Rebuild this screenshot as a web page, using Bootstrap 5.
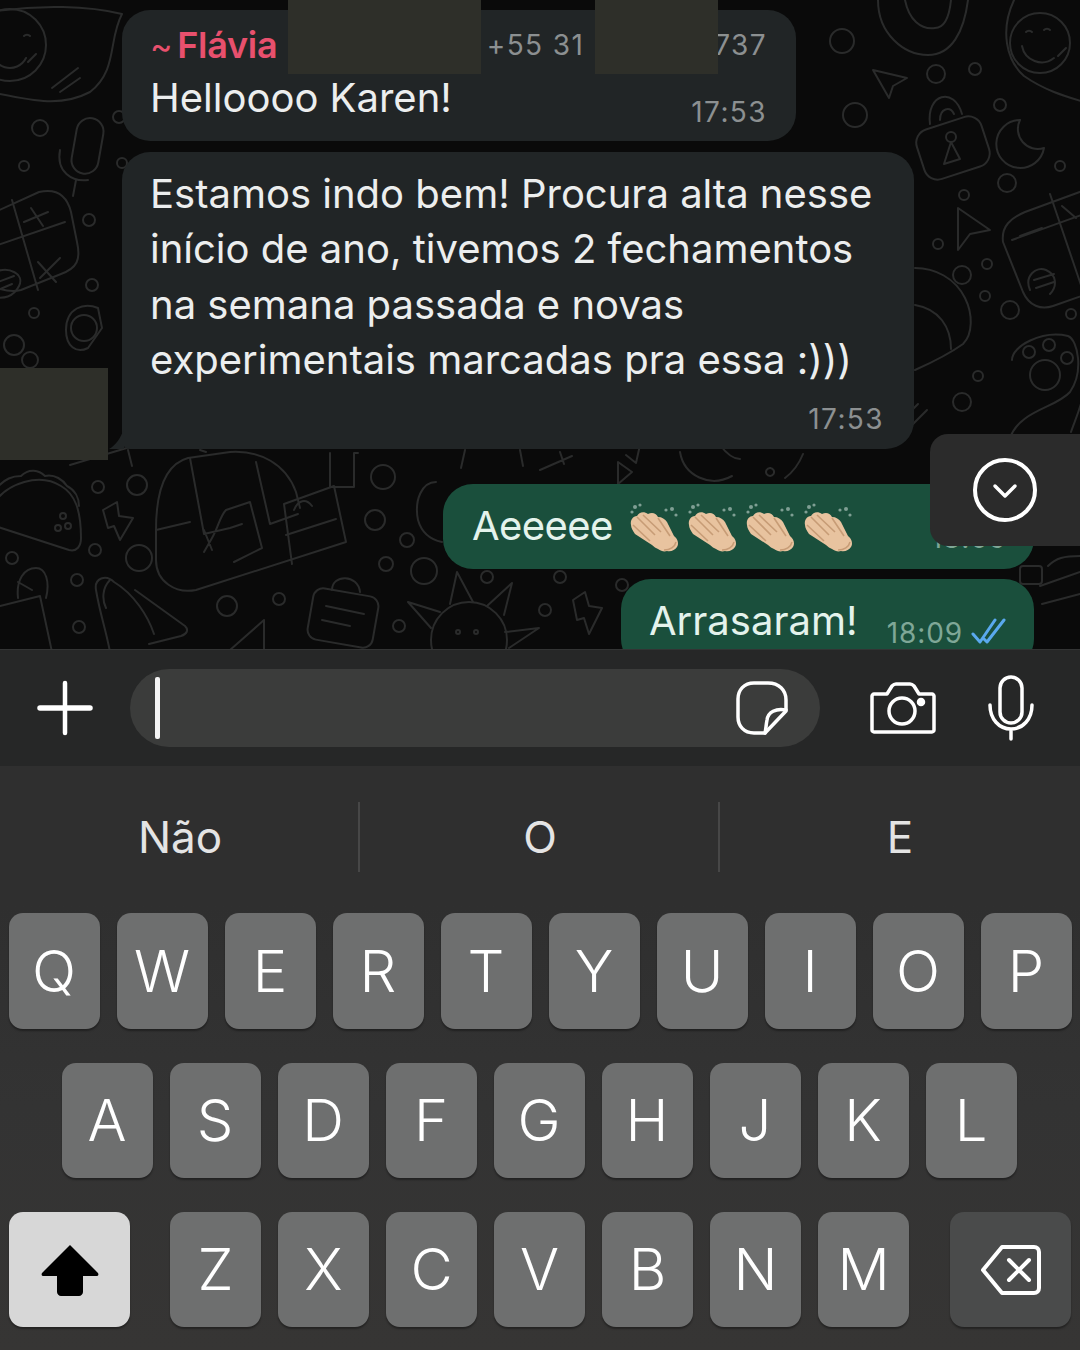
<!DOCTYPE html>
<html lang="pt-BR">
<head>
  <meta charset="UTF-8">
  <title>Conversa</title>
  <meta name="viewport" content="width=device-width, initial-scale=1">
  <link href="https://cdn.jsdelivr.net/npm/bootstrap@5.3.3/dist/css/bootstrap.min.css" rel="stylesheet">
  <script src="https://cdn.jsdelivr.net/npm/bootstrap@5.3.3/dist/js/bootstrap.bundle.min.js"></script>
  <style>
    body {
      background: #2d2d2d;
      font-family: Inter, "Liberation Sans", sans-serif;
      width: 1080px;
      height: 1350px;
      overflow: hidden;
    }
    .chat-area {
      height: 649px;
      background: #0a0a0a;
      padding-top: 10px;
    }
    .wallpaper { left: 0; top: 0; }
    .wallpaper * { fill: none; stroke: #2a2b2b; stroke-width: 2; stroke-linecap: round; stroke-linejoin: round; }
    .bubble {
      color: #eceeee;
      font-size: 40px;
      line-height: 55.3px;
    }
    .bubble-in { background: #212526; margin-left: 122px; }
    .bubble-out { background: #1a4f3c; margin-left: auto; margin-right: 46px; color: #e4f3ec; }
    .bubble-one { width: 674px; height: 131px; border-radius: 28px; padding: 7px 29px 0 28px; margin-bottom: 11px; }
    .bubble-two { width: 792px; height: 297px; border-radius: 28px 28px 28px 8px; padding: 14px 30px 0 28px; margin-bottom: 35px; }
    .bubble-three { width: 591px; height: 85px; border-radius: 30px; padding: 14px 27px 0 29px; margin-bottom: 10px; }
    .bubble-four { width: 413px; height: 90px; border-radius: 30px; padding: 14px 27px 0 28px; }
    .tail { left: -14px; bottom: 0; }
    .sender { color: #e8506d; font-size: 36px; font-weight: 600; line-height: 56px; letter-spacing: -.3px; }
    .sender-mark { font-size: 34px; font-weight: 400; margin-right: 5px; }
    .phone { color: #8c9091; font-size: 28px; line-height: 56px; letter-spacing: 1.4px; }
    .phone-gap { display: inline-block; width: 130px; }
    .msg-time { color: #8c9091; font-size: 28px; line-height: 32px; letter-spacing: 1.4px; }
    .out-time { color: #7fa797; letter-spacing: .9px; }
    .tight-text { letter-spacing: -.6px; }
    .hello-row { margin-top: -4px; }
    .hello-row .msg-time { margin-top: 26px; }
    .time-right { margin-top: 16px; }
    .out-meta { margin-top: 24px; }
    .redact { background: #2e2f29; }
    .redact-a { left: 288px; top: 0; width: 193px; height: 74px; }
    .redact-b { left: 595px; top: 0; width: 123px; height: 74px; }
    .redact-c { left: 0; top: 368px; width: 108px; height: 92px; }
    .scroll-down {
      right: 0; top: 434px; width: 150px; height: 112px;
      background: #2b2b2b;
      border-radius: 18px 0 0 18px;
    }
    .composer {
      height: 117px;
      background: #262727;
      border-top: 1px solid #333434;
      padding-left: 36px;
    }
    .field {
      width: 690px; height: 78px;
      margin-left: 36px;
      background: #3b3c3b;
      border-radius: 39px;
      padding-left: 25px;
      padding-right: 32px;
    }
    .caret-bar { width: 5px; height: 62px; background: #f4f4f4; border-radius: 2px; }
    .camera-icon { margin-left: 50px; }
    .mic-icon { margin-left: 52px; }
    .suggest { height: 139px; background: #2f2f2f; }
    .suggest-item { width: 360px; height: 70px; margin-top: 2px; color: #e4e4e4; font-size: 44px; }
    .suggest-item:first-child { width: 358px; padding-left: 2px; }
    .suggest-item + .suggest-item { border-left: 2px solid #474747; padding-left: 2px; }
    .keyboard {
      height: 445px;
      padding-top: 8px;
      background: linear-gradient(to bottom, #2f2f2f 0%, #333 45%, #363534 100%);
    }
    .key-row { gap: 17px; margin-bottom: 34px; }
    .key-cap {
      width: 91px; height: 116px;
      background: #6e6f6f;
      border-radius: 14px;
      color: #fff;
      font-size: 58px;
      font-weight: 300;
      box-shadow: 0 2px 2px rgba(0,0,0,.35);
    }
    .row-lower .key-cap { height: 115px; }
    .row-shifted { padding-right: 2px; }
    .key-wide { width: 121px; }
    .key-shift { background: #d7d7d7; }
    .key-back { background: #4a4b4b; }
    .gap-shift { margin-left: 23px; }
    .gap-back { margin-left: 24px; }
  </style>
</head>
<body>
  <div class="chat-area position-relative overflow-hidden">
    <svg class="wallpaper position-absolute" width="1080" height="649" viewBox="0 0 1080 649">
      <!-- lado esquerdo -->
      <path d="M-10 12C40 4 90 6 122 14C108 40 118 70 90 92C60 108 30 100 -10 92"/>
      <circle cx="10" cy="45" r="36"/><path d="M-8 48a18 18 0 0 0 34 10M24 36a4 4 0 0 1 6 0M28 62l8-8"/>
      <path d="M52 88l26-20M60 92l20-14"/>
      <circle cx="40" cy="128" r="8"/><circle cx="24" cy="166" r="5"/><circle cx="119" cy="117" r="6"/><circle cx="122" cy="163" r="5"/>
      <rect x="74" y="118" width="27" height="56" rx="13.5" transform="rotate(10 88 146)"/>
      <path d="M60 150c-4 22 12 32 28 30M76 180l-3 16"/>
      <path d="M-5 212l44-20c18-4 28 4 32 20l6 30c4 18 0 26-16 32l-40 16c-8 2-20 0-30-4M12 200l26 90M-5 246l70-24"/>
      <path d="M31 208l12 18M24 222l24-10M38 262l18 20M60 258l-20 20"/>
      <circle cx="89" cy="220" r="6"/><circle cx="34" cy="313" r="5"/><circle cx="92" cy="285" r="6"/>
      <path d="M-5 272c14-6 30 2 24 14s-16 12-24 12M-2 282l16-6M-2 290l14-6"/>
      <circle cx="84" cy="328" r="13"/><path d="M66 330c0-22 18-28 32-22l4 20-14 20c-12 6-22 -2 -22-18"/>
      <circle cx="14" cy="345" r="10"/><circle cx="30" cy="360" r="8"/>
      <!-- lado direito -->
      <path d="M878 0c0 34 26 55 50 55c24 0 36-24 40-55M905 0c4 20 16 30 30 28c8 0 14-8 16-28"/>
      <circle cx="842" cy="41" r="12"/><circle cx="936" cy="74" r="9"/><circle cx="975" cy="69" r="6"/><circle cx="855" cy="115" r="12"/>
      <path d="M873 70l34 8-14 8-4 12z"/>
      <path d="M1014 0c-14 30-8 60 10 76c20 14 40 20 60 26"/>
      <circle cx="1040" cy="43" r="30"/><path d="M1022 46a20 20 0 0 0 32 12M1026 32a4 4 0 0 1 6 0M1044 30a4 4 0 0 1 6 0M1058 56l8-8"/>
      <circle cx="1000" cy="105" r="6"/>
      <path d="M1020 120a24 24 0 1 0 24 28a20 20 0 0 1-24-28z"/>
      <rect x="919" y="122" width="68" height="52" rx="14" transform="rotate(-18 953 148)"/>
      <path d="M930 124c-4-30 24-38 32-10M940 120c0-12 10-14 14-6"/>
      <circle cx="951" cy="137" r="5"/><path d="M951 142l-7 22 16-5z"/>
      <circle cx="1007" cy="183" r="9"/><circle cx="1060" cy="166" r="5"/><circle cx="964" cy="195" r="5"/>
      <path d="M958 208l32 22-20 4-12 16z"/>
      <circle cx="938" cy="244" r="5"/><circle cx="962" cy="275" r="9"/><circle cx="987" cy="264" r="5"/><circle cx="985" cy="296" r="5"/>
      <path d="M1085 190l-60 22c-14 6-24 14-22 30l20 50c6 14 18 18 30 14l40-14M1050 194l34 100M1012 240l72-26M1030 290c-6-14 6-24 16-20c10 4 12 16 4 24M1034 280l20-6M1036 288l18-6"/>
      <path d="M1020 236l22-8M1062 206l14 12"/>
      <circle cx="1010" cy="310" r="9"/><circle cx="1071" cy="314" r="5"/>
      <path d="M915 268c20 0 40 10 50 30c8 16 8 36 -2 46c-14 10-30 18-48 26M915 305c24 4 36 22 36 44"/>
      <circle cx="978" cy="376" r="5"/><circle cx="962" cy="402" r="9"/>
      <circle cx="1029" cy="352" r="6"/><circle cx="1049" cy="345" r="6"/><circle cx="1067" cy="358" r="6"/>
      <circle cx="1045" cy="375" r="15"/>
      <path d="M1012 360c0-14 30-30 56-24c10 4 16 36 2 56c-14 16-50 18-60 46M1085 388c-4 20-10 32-14 44"/>
      <path d="M897 440l30-30M888 434l30-30"/>
      <!-- parte de baixo -->
      <path d="M-5 502c12-18 44-30 66-16c14 8 20 24 20 52c0 8-4 14-12 12l-74-24"/>
      <path d="M-5 490c10-12 18-14 26-14c8-8 18-6 24 0c10-2 18 4 22 10c8 4 12 12 12 20"/>
      <circle cx="63" cy="516" r="3"/><circle cx="58" cy="528" r="3"/><circle cx="68" cy="526" r="3"/>
      <path d="M103 510l14-8 2 14 14 2-13 22-6-14-6 2z"/>
      <circle cx="98" cy="487" r="6"/><circle cx="137" cy="485" r="10"/><circle cx="95" cy="550" r="6"/><circle cx="139" cy="558" r="13"/>
      <circle cx="12" cy="558" r="6"/><circle cx="77" cy="580" r="6"/><circle cx="79" cy="627" r="6"/>
      <path d="M156 530c0-40 10-66 32-72l42-6c30-2 56 12 66 40l4 16M156 530v30c0 22 20 34 40 30l150-48-12-56-50 18 8 60"/>
      <path d="M156 530l34-8M190 458l14 76 26-6 12-4M200 450l6 2M212 550l-8-20M204 552l8-14c6-10 8-22 14-28l24-8 12 46-28 14M256 462l14 62 28-10"/>
      <path d="M294 510c4-10 12-12 18-4M286 535l50-16"/>
      <path d="M330 453v34h24v-34M354 453h4"/>
      <circle cx="383" cy="477" r="12"/><circle cx="375" cy="520" r="10"/><circle cx="407" cy="540" r="7"/><circle cx="386" cy="564" r="7"/><circle cx="424" cy="571" r="13"/>
      <path d="M418 520c-4-20 4-38 18-38M418 520c4 14 14 20 24 22"/>
      <path d="M70 465l60-18M128 450l4 16"/>
      <circle cx="227" cy="606" r="10"/><circle cx="279" cy="599" r="6"/><circle cx="399" cy="626" r="6"/>
      <circle cx="487" cy="577" r="6"/><circle cx="560" cy="577" r="6"/><circle cx="622" cy="585" r="6"/>
      <path d="M96 590c-2-12 10-16 18-8c20 12 34 34 40 52M110 580c-8 8-8 20-4 28M96 590c4 24 10 40 14 62M135 590l50 36c4 4 2 8-4 10l-32 8"/>
      <path d="M0 606l40-10 12 56M18 598c-2-18 6-30 18-30c10 0 14 14 10 30M18 582l14 8"/>
      <path d="M230 650l34-30v30"/>
      <rect x="310" y="592" width="66" height="52" rx="10" transform="rotate(10 343 618)"/>
      <path d="M332 590c0-16 26-16 28 2M326 606l38 8M322 620l28 6"/>
      <circle cx="469" cy="640" r="38"/>
      <path d="M450 604l7-32 16 30M487 606l25-23-8 32M431 628l-23-26 32 10M505 632l34-4-30 20"/>
      <circle cx="458" cy="632" r="2"/><circle cx="476" cy="632" r="2"/>
      <path d="M573 600l12-8 4 14 13 2-13 26-5-16-7 2z"/>
      <circle cx="545" cy="610" r="6"/>
      <path d="M640 445l-4 18-10-8M680 452c4 24 30 36 52 24M720 445c6 8 12 14 20 14M465 450l-4 18M520 450l3 16M540 470l32-14M560 452l4 12"/>
      <path d="M618 462l14 10-14 12zM785 478c8-6 14-14 18-24M770 468a4 4 0 1 0 .1 0"/>
      <path d="M1040 586l40-14M1042 604l38-10"/>
      <rect x="1020" y="566" width="22" height="18" rx="3"/>
      <path d="M1048 566c8-8 16-10 32-10"/>
    </svg>

    <div class="bubble bubble-in bubble-one position-relative">
      <div class="d-flex justify-content-between">
        <span class="sender"><span class="sender-mark">~</span>Flávia</span>
        <span class="phone">+55 31<span class="phone-gap"></span>737</span>
      </div>
      <div class="d-flex justify-content-between hello-row">
        <span>Helloooo Karen!</span>
        <span class="msg-time">17:53</span>
      </div>
    </div>

    <div class="bubble bubble-in bubble-two position-relative">
      <svg class="tail position-absolute" width="16" height="20" viewBox="0 0 16 20"><path d="M16 0V20H1C8 16 12 10 16 0z" fill="#212526"/></svg>
      <div>Estamos indo bem! Procura alta nesse<br>início de ano, tivemos 2 fechamentos<br>na semana passada e novas<br>experimentais marcadas pra essa :)))</div>
      <div class="msg-time text-end time-right">17:53</div>
    </div>

    <div class="bubble bubble-out bubble-three position-relative d-flex justify-content-between">
      <span class="d-flex align-items-start tight-text">Aeeeee
        <svg class="ms-3" width="225" height="54" viewBox="0 0 225 54">
          <defs>
            <g id="clap">
              <g fill="#7f9f94"><circle cx="3" cy="14" r="1.6"/><circle cx="6" cy="9" r="2"/><circle cx="11" cy="7" r="1.6"/><circle cx="37" cy="12" r="1.6"/><circle cx="43" cy="11" r="2"/><circle cx="47" cy="17" r="1.6"/></g>
              <path d="M2 27c-1-5 2-9 6-9 2-4 7-5 11-2 4-2 8-1 10 3 4 0 7 2 9 5l7 14c4 3 5 8 3 11-2 3-6 5-10 4-3 1-6 0-9-2-2-1-4-2-6-4L6 36c-2-3-4-6-4-9z" fill="#e8c39f"/>
              <path d="M8 19l18 18M14 17l18 17M4 27l17 16M29 20l12 18" stroke="#c79c76" stroke-width="1.6" fill="none"/>
              <path d="M35 52c6 0 11-3 12-8" stroke="#c79c76" stroke-width="1.5" fill="none"/>
            </g>
          </defs>
          <use href="#clap"/><use href="#clap" x="58"/><use href="#clap" x="116"/><use href="#clap" x="174"/>
        </svg>
      </span>
      <span class="msg-time out-time out-meta">18:09</span>
    </div>

    <div class="bubble bubble-out bubble-four d-flex justify-content-between">
      <span>Arrasaram!</span>
      <span class="d-flex align-items-start out-meta">
        <span class="msg-time out-time">18:09</span>
        <svg class="ms-2" width="36" height="28" viewBox="0 0 36 28" fill="none" stroke="#5aa9ee" stroke-width="3" stroke-linecap="round" stroke-linejoin="round"><path d="M2 17l7 8L24 3M13 22l3 3L33 3"/></svg>
      </span>
    </div>

    <div class="redact position-absolute redact-a"></div>
    <div class="redact position-absolute redact-b"></div>
    <div class="redact position-absolute redact-c"></div>
    <div class="scroll-down position-absolute d-flex align-items-center justify-content-center">
      <svg width="66" height="66" viewBox="0 0 66 66" fill="none" stroke="#fff" stroke-linecap="round" stroke-linejoin="round"><circle cx="33" cy="33" r="30" stroke-width="4"/><path d="M23 29l10 10 10-10" stroke-width="3.5"/></svg>
    </div>
  </div>

  <div class="composer d-flex align-items-center">
    <svg width="58" height="58" viewBox="0 0 58 58" stroke="#fff" stroke-linecap="round"><path d="M29 4v50" stroke-width="4.5"/><path d="M4 29h50" stroke-width="5.5"/></svg>
    <div class="field d-flex align-items-center justify-content-between">
      <span class="caret-bar"></span>
      <svg width="52" height="54" viewBox="0 0 52 54" fill="none" stroke="#fff" stroke-width="3.5" stroke-linejoin="round" stroke-linecap="round"><path d="M18 2h14c11 0 18 7 18 17v11L29 52H18C8 52 2 45 2 36V18C2 9 8 2 18 2z"/><path d="M50 29c-10-2-18 2-19 10c-1 5-1 9-2 13"/></svg>
    </div>
    <svg class="camera-icon" width="66" height="52" viewBox="0 0 66 52" fill="none" stroke="#fff" stroke-width="3.5" stroke-linecap="round" stroke-linejoin="round"><path d="M4 12h13l5-8c1-1 2-2 4-2h14c2 0 3 1 4 2l5 8h13c1 0 2 1 2 2v34c0 1-1 2-2 2H4c-1 0-2-1-2-2V14c0-1 1-2 2-2z"/><circle cx="32" cy="29" r="13"/><circle cx="51" cy="20" r="2.5" fill="#fff"/></svg>
    <svg class="mic-icon" width="46" height="66" viewBox="0 0 46 66" fill="none" stroke="#fff" stroke-width="3.5" stroke-linecap="round"><rect x="12" y="2" width="22" height="46" rx="11"/><path d="M2 30c0 14 9 24 21 24s21-10 21-24M23 54v10"/></svg>
  </div>

  <div class="suggest d-flex align-items-center">
    <div class="suggest-item d-flex align-items-center justify-content-center">Não</div>
    <div class="suggest-item d-flex align-items-center justify-content-center">O</div>
    <div class="suggest-item d-flex align-items-center justify-content-center">E</div>
  </div>

  <div class="keyboard">
    <div class="key-row d-flex justify-content-center" id="rowOne"></div>
    <div class="key-row row-lower row-shifted d-flex justify-content-center" id="rowTwo"></div>
    <div class="key-row row-lower d-flex justify-content-center" id="rowThree"></div>
  </div>

  <template id="shiftTpl">
    <div class="key-cap key-wide key-shift d-flex align-items-center justify-content-center">
      <svg width="60" height="52" viewBox="0 0 60 52"><path d="M30 1L58 29c1 2 0 3-2 3H43v16c0 2-2 4-4 4H21c-2 0-4-2-4-4V32H4c-2 0-3-1-2-3z" fill="#000"/></svg>
    </div>
  </template>
  <template id="backTpl">
    <div class="key-cap key-wide key-back d-flex align-items-center justify-content-center">
      <svg width="62" height="52" viewBox="0 0 62 52" fill="none" stroke="#fff" stroke-width="4" stroke-linejoin="round" stroke-linecap="round"><path d="M22 3h32c3 0 5 2 5 5v36c0 3-2 5-5 5H22L3 26z"/><path d="M29 16l20 20M49 16L29 36"/></svg>
    </div>
  </template>

  <script>
    function addKeys(rowId, letters) {
      const row = document.getElementById(rowId);
      letters.split("").forEach(ch => {
        const key = document.createElement("div");
        key.className = "key-cap d-flex align-items-center justify-content-center";
        key.innerText = ch;
        row.appendChild(key);
      });
    }

    addKeys("rowOne", "QWERTYUIOP");
    addKeys("rowTwo", "ASDFGHJKL");

    const lastRow = document.getElementById("rowThree");
    lastRow.appendChild(document.getElementById("shiftTpl").content.cloneNode(true));
    addKeys("rowThree", "ZXCVBNM");
    lastRow.appendChild(document.getElementById("backTpl").content.cloneNode(true));
    lastRow.children[1].classList.add("gap-shift");
    lastRow.children[8].classList.add("gap-back");
  </script>
</body>
</html>
